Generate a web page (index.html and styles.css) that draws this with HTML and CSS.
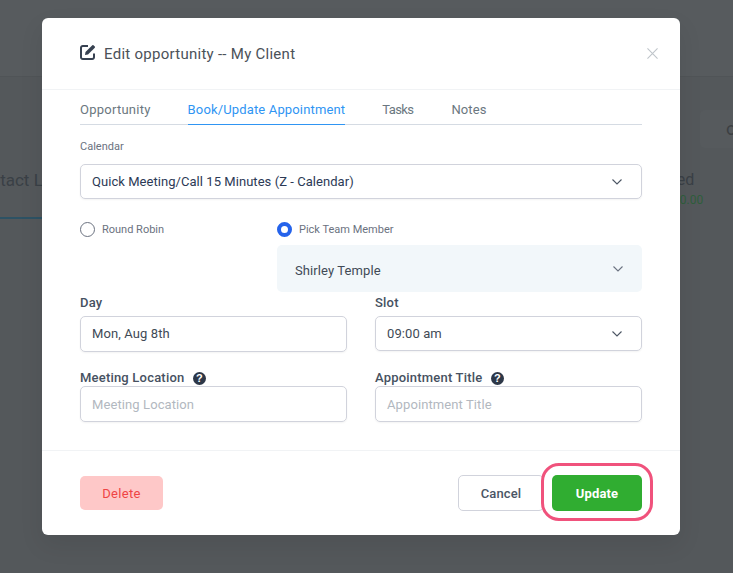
FILE: index.html
```html
<!DOCTYPE html>
<html lang="en">
<head>
    <meta charset="UTF-8">
    <meta name="viewport" content="width=device-width, initial-scale=1.0">
    <title>Edit opportunity</title>
    <link rel="stylesheet" href="styles.css">
</head>
<body>

<!-- Page behind the modal, dimmed -->
<div class="backdrop">
    <div class="backdrop-top"></div>
    <div class="backdrop-pill">o</div>
    <div class="backdrop-tab">Contact Lead</div>
    <div class="backdrop-tab-line"></div>
    <div class="backdrop-stat">Closed</div>
    <div class="backdrop-money">$0.00</div>
</div>

<div class="modal">
    <div class="modal-header">
        <svg class="edit-icon" viewBox="0 0 16 16" width="16" height="16">
            <path d="M14 9.500v3.700A1.800 1.800 0 0 1 12.200 15H2.800A1.800 1.800 0 0 1 1 13.200V3.800A1.800 1.800 0 0 1 2.800 2H8" fill="none" stroke="#374151" stroke-width="2"/>
            <path d="M5.500 8 12.300 1.200a.9.9 0 0 1 1.200 0l1.300 1.300a.9.9 0 0 1 0 1.200L8 10.500l-3 .5z" fill="#374151"/>
        </svg>
        <h2>Edit opportunity -- My Client</h2>
        <svg class="close-icon" viewBox="0 0 12 12" width="12" height="12">
            <path d="M.5.5l11 11M11.500.5l-11 11" stroke="#bfc5ca" stroke-width="1.200" fill="none"/>
        </svg>
    </div>

    <div class="modal-body">
        <div class="tabs">
            <span class="tab tab-first">Opportunity</span>
            <span class="tab active">Book/Update Appointment</span>
            <span class="tab tab-tasks">Tasks</span>
            <span class="tab">Notes</span>
        </div>

        <label class="small-label">Calendar</label>
        <div class="field select-field calendar">
            <span>Quick Meeting/Call 15 Minutes (Z - Calendar)</span>
            <svg class="chevron" viewBox="0 0 10 6" width="10" height="6"><path d="M.5.5 5 5 9.500.5" fill="none" stroke="#4b5563" stroke-width="1.100"/></svg>
        </div>

        <div class="assign">
            <div class="radio-col">
                <div class="radio-row"><span class="radio"></span>Round Robin</div>
            </div>
            <div class="team-col">
                <div class="radio-row"><span class="radio checked"></span>Pick Team Member</div>
                <div class="team-select">
                    <span class="team-name">Shirley Temple</span>
                    <svg class="chevron" viewBox="0 0 10 6" width="10" height="6"><path d="M.5.5 5 5 9.500.5" fill="none" stroke="#6b7280" stroke-width="1.100"/></svg>
                </div>
            </div>
        </div>

        <div class="form-grid">
            <div class="form-col">
                <label class="field-label">Day</label>
                <div class="field tall">Mon, Aug 8th</div>
            </div>
            <div class="form-col">
                <label class="field-label">Slot</label>
                <div class="field select-field">
                    <span>09:00 am</span>
                    <svg class="chevron" viewBox="0 0 10 6" width="10" height="6"><path d="M.5.5 5 5 9.500.5" fill="none" stroke="#4b5563" stroke-width="1.100"/></svg>
                </div>
            </div>
            <div class="form-col">
                <label class="field-label help">Meeting Location
                    <svg viewBox="0 0 16 16" width="13" height="13"><circle cx="8" cy="8" r="8" fill="#2d3748"/><text x="8" y="12.800" text-anchor="middle" class="help-mark">?</text></svg>
                </label>
                <div class="field tall placeholder">Meeting Location</div>
            </div>
            <div class="form-col">
                <label class="field-label help">Appointment Title
                    <svg viewBox="0 0 16 16" width="13" height="13"><circle cx="8" cy="8" r="8" fill="#2d3748"/><text x="8" y="12.800" text-anchor="middle" class="help-mark">?</text></svg>
                </label>
                <div class="field tall placeholder">Appointment Title</div>
            </div>
        </div>
    </div>

    <div class="modal-footer">
        <button class="btn btn-delete">Delete</button>
        <div class="footer-right">
            <button class="btn btn-cancel">Cancel</button>
            <button class="btn btn-update">Update</button>
            <!-- Pink annotation around the update button -->
            <div class="highlight-ring"></div>
        </div>
    </div>
</div>

</body>
</html>
```

FILE: styles.css
```css
/* General */
html, body {
    margin: 0;
    padding: 0;
    height: 100%;
    overflow: hidden;
    background-color: #54585b;
    font-family: Roboto, "Liberation Sans", sans-serif;
}

/* Page behind the modal */
.backdrop {
    position: absolute;
    inset: 0;
    overflow: hidden;
}

.backdrop-top {
    height: 76px;
    background-color: #575b5e;
    border-bottom: 1px solid #505457;
}

.backdrop-pill {
    position: absolute;
    left: 700px;
    top: 110px;
    width: 60px;
    height: 38px;
    box-sizing: border-box;
    padding-left: 26px;
    padding-top: 8px;
    background-color: #565a5d;
    border-radius: 5px;
    font-size: 18px;
    color: #3c4043;
}

.backdrop-tab {
    position: absolute;
    left: -30px;
    top: 170px;
    font-size: 17px;
    color: #3a4046;
    white-space: nowrap;
}

.backdrop-tab-line {
    position: absolute;
    left: 0;
    top: 217px;
    width: 42px;
    height: 2px;
    background-color: #2d5264;
}

.backdrop-stat {
    position: absolute;
    left: 645px;
    top: 170px;
    font-size: 16px;
    color: #3a4046;
}

.backdrop-money {
    position: absolute;
    left: 673px;
    top: 193px;
    font-size: 12px;
    color: #2f5e3b;
}

/* Modal */
.modal {
    position: relative;
    box-sizing: border-box;
    width: 638px;
    height: 517px;
    margin: 18px 0 0 42px;
    background-color: #fff;
    border-radius: 6px;
    box-shadow: 0 10px 25px rgba(0, 0, 0, 0.08);
}

.modal-header {
    display: flex;
    align-items: center;
    height: 72px;
    box-sizing: border-box;
    padding: 0 22px 0 38px;
    border-bottom: 1px solid #f1f3f5;
}

.edit-icon {
    margin-right: 8px;
    margin-top: -3px;
}

.modal-header h2 {
    flex: 1;
    margin: 0;
    font-size: 15px;
    font-weight: 400;
    letter-spacing: 0.27px;
    color: #4b5259;
}

.close-icon {
    width: 11px;
    height: 11px;
}

.modal-body {
    padding: 0 38px;
}

/* Tabs */
.tabs {
    display: flex;
    gap: 37px;
    height: 35px;
    box-sizing: border-box;
    border-bottom: 1px solid #d5dbe3;
}

.tab {
    height: 35px;
    box-sizing: border-box;
    padding-top: 12px;
    font-size: 13px;
    line-height: 16px;
    letter-spacing: 0.15px;
    color: #6b7780;
}

.tab-first {
    letter-spacing: 0.25px;
}

.tab-tasks {
    letter-spacing: -0.6px;
    margin-right: 1px;
}

.tab.active {
    color: #2f95f3;
    border-bottom: 1px solid #2f95f3;
}

/* Fields */
.small-label {
    display: block;
    margin-top: 15px;
    font-size: 11px;
    line-height: 14px;
    color: #6b7280;
}

.field {
    box-sizing: border-box;
    height: 35px;
    padding: 0 11px;
    border: 1px solid #d1d3dc;
    border-radius: 5px;
    box-shadow: 0 1px 2px rgba(0, 0, 0, 0.05);
    font-size: 13px;
    line-height: 33px;
    letter-spacing: 0.1px;
    color: #414a56;
}

.field.tall {
    height: 36px;
    line-height: 34px;
}

.field.placeholder {
    line-height: 36px;
    color: #b2b8c0;
}

.select-field {
    display: flex;
    align-items: center;
    justify-content: space-between;
    padding-right: 19px;
}

.calendar {
    margin-top: 10px;
    letter-spacing: 0.05px;
    color: #2c3a56;
}

.chevron {
    flex-shrink: 0;
}

/* Round robin / team member */
.assign {
    display: flex;
    margin-top: 22px;
}

.radio-col {
    width: 197px;
}

.team-col {
    flex: 1;
}

.radio-row {
    display: flex;
    align-items: center;
    gap: 7px;
    height: 16px;
    font-size: 11px;
    color: #6b7280;
}

.radio {
    box-sizing: border-box;
    width: 15px;
    height: 15px;
    border: 1px solid #6b7280;
    border-radius: 50%;
}

.radio.checked {
    border: 4px solid #2563eb;
    background-color: #fff;
}

.team-select {
    display: flex;
    align-items: center;
    justify-content: space-between;
    box-sizing: border-box;
    height: 47px;
    margin-top: 8px;
    padding: 0 19px 0 18px;
    background-color: #f2f7fa;
    border-radius: 5px;
    font-size: 13px;
    letter-spacing: 0.1px;
    color: #414a56;
}

.team-name {
    padding-top: 3px;
}

/* Day, slot, location, title */
.form-grid {
    display: grid;
    grid-template-columns: 267px 267px;
    column-gap: 28px;
    row-gap: 11px;
    margin-top: 3px;
}

.field-label {
    display: block;
    height: 21px;
    font-size: 13px;
    font-weight: 500;
    line-height: 15px;
    letter-spacing: 0.2px;
    color: #465161;
}

.field-label.help {
    display: flex;
    align-items: center;
    gap: 9px;
    height: 14px;
    margin-top: 8px;
    margin-bottom: 1px;
    line-height: 14px;
}

.help-mark {
    font-family: "Liberation Sans", sans-serif;
    font-size: 13.500px;
    font-weight: 700;
    fill: #fff;
}

/* Footer */
.modal-footer {
    position: absolute;
    left: 0;
    right: 0;
    bottom: 0;
    display: flex;
    align-items: center;
    justify-content: space-between;
    height: 85px;
    box-sizing: border-box;
    padding: 0 38px;
    border-top: 1px solid #f1f3f5;
}

.footer-right {
    position: relative;
    display: flex;
    gap: 8px;
}

.btn {
    height: 36px;
    box-sizing: border-box;
    border: none;
    border-radius: 5px;
    font-family: Roboto, "Liberation Sans", sans-serif;
    font-size: 13px;
    font-weight: 500;
    letter-spacing: 0.15px;
}

.btn-delete {
    width: 83px;
    height: 34px;
    background-color: #fec8c8;
    font-weight: 400;
    letter-spacing: 0.3px;
    color: #ef4444;
}

.btn-cancel {
    width: 86px;
    background-color: #fff;
    border: 1px solid #d1d3dc;
    color: #4a5565;
}

.btn-update {
    width: 90px;
    background-color: #30ad31;
    color: #fff;
    font-weight: 700;
}

.highlight-ring {
    position: absolute;
    left: 83px;
    top: -12px;
    width: 112px;
    height: 58px;
    box-sizing: border-box;
    border: 3px solid #f0527c;
    border-radius: 18px;
}
```
